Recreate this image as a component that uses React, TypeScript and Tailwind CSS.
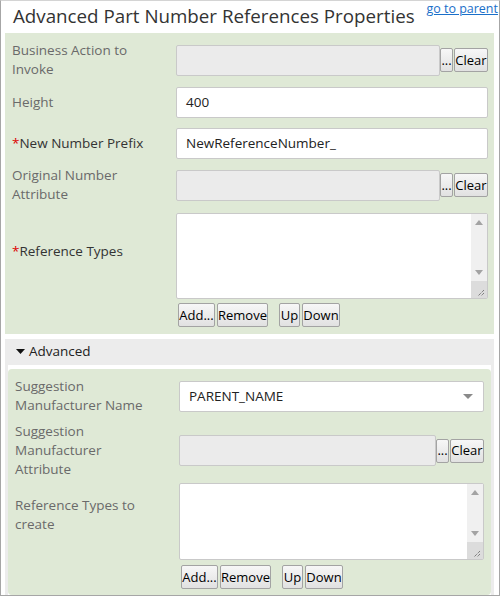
import React from "react";

const font = { fontFamily: '"Open Sans", "Noto Sans", sans-serif' };

const Btn: React.FC<{ label: string; w: string }> = ({ label, w }) => (
  <button
    type="button"
    className={`${w} h-[24px] flex items-center justify-center border border-[#a3a3a3] rounded-[2px] bg-gradient-to-b from-[#f7f7f7] to-[#e1e1e1] text-[13px] leading-none text-black whitespace-nowrap`}
  >
    {label}
  </button>
);

const Picker: React.FC = () => (
  <div className="flex flex-1 items-center">
    <div className="flex-1 h-[31px] border border-[#c9c9c9] rounded-[2px] bg-[#ebebeb]" />
    <Btn label="..." w="w-[13px]" />
    <Btn label="Clear" w="w-[34px] ml-px" />
  </div>
);

const TextBox: React.FC<{ value: string }> = ({ value }) => (
  <div className="flex-1 h-[31px] border border-[#c9c9c9] rounded-[2px] bg-white flex items-center px-[9px] text-[13.5px] text-[#222]">
    {value}
  </div>
);

const Grip = () => (
  <svg width="16" height="17" viewBox="0 0 16 17">
    <path d="M13 9 L7 15 M13 12 L10 15" stroke="#555" strokeWidth="1" strokeDasharray="1 1" />
  </svg>
);

const ListBox: React.FC<{ h: string }> = ({ h }) => (
  <div className={`flex-1 ${h} border border-[#c9c9c9] rounded-[2px] bg-white flex`}>
    <div className="flex-1" />
    <div className="w-[16px] bg-[#f0f0f0] flex flex-col">
      <div className="h-[17px] flex items-center justify-center">
        <svg width="8" height="5" viewBox="0 0 8 5">
          <path d="M0 5 L4 0 L8 5 Z" fill="#a3a3a3" />
        </svg>
      </div>
      <div className="flex-1" />
      <div className="h-[17px] flex items-center justify-center">
        <svg width="8" height="5" viewBox="0 0 8 5">
          <path d="M0 0 L8 0 L4 5 Z" fill="#a3a3a3" />
        </svg>
      </div>
      <div className="h-[17px] bg-[#dcdcdc]">
        <Grip />
      </div>
    </div>
  </div>
);

const ListButtons: React.FC<{ ml: string }> = ({ ml }) => (
  <div className={`flex items-center ${ml}`}>
    <Btn label="Add..." w="w-[37px]" />
    <Btn label="Remove" w="w-[51px] ml-[2px]" />
    <Btn label="Up" w="w-[21px] ml-[11px]" />
    <Btn label="Down" w="w-[38px] ml-[2px]" />
  </div>
);

const Label: React.FC<{ children: React.ReactNode; required?: boolean; cls?: string }> = ({
  children,
  required,
  cls = "",
}) => (
  <div
    className={`w-[164px] shrink-0 text-[13.5px] leading-[19px] whitespace-nowrap ${
      required ? "text-[#333]" : "text-[#6a6a6a]"
    } ${cls}`}
  >
    {required && <span className="text-[#d00]">*</span>}
    {children}
  </div>
);

export default function App() {
  return (
    <div
      style={font}
      className="w-[500px] h-[596px] border border-[#a6a6a6] border-t-[#d4d4d4] bg-white overflow-hidden"
    >
      {/* header */}
      <div className="h-[32px] flex items-start justify-between pl-[12px] pr-[1px]">
        <h1 className="text-[18.75px] leading-[30px] text-[#333] font-normal whitespace-nowrap min-w-0">
          Advanced Part Number References Properties
        </h1>
        <a
          href="#"
          className="shrink-0 text-[12.5px] leading-[18px] mt-[-1px] text-[#1a6fc9] underline whitespace-nowrap"
        >
          go to parent
        </a>
      </div>

      {/* main properties */}
      <div className="ml-[4px] mr-[5px] bg-[#dfe9d6] pl-[7px] pr-[6px] pt-[8px] pb-[7px] flex flex-col">
        <div className="flex items-center h-[38px]">
          <Label>
            Business Action to
            <br />
            Invoke
          </Label>
          <Picker />
        </div>
        <div className="flex items-center h-[31px] mt-[8px]">
          <Label>Height</Label>
          <TextBox value="400" />
        </div>
        <div className="flex items-center h-[31px] mt-[10px]">
          <Label required>New Number Prefix</Label>
          <TextBox value="NewReferenceNumber_" />
        </div>
        <div className="flex items-center h-[38px] mt-[7px]">
          <Label>
            Original Number
            <br />
            Attribute
          </Label>
          <Picker />
        </div>
        <div className="flex items-center mt-[9px]">
          <Label required cls="mb-[10px]">
            Reference Types
          </Label>
          <ListBox h="h-[86px]" />
        </div>
        <div className="flex mt-[4px]">
          <div className="w-[164px]" />
          <ListButtons ml="ml-[2px]" />
        </div>
      </div>

      {/* advanced */}
      <div className="ml-[4px] mr-[5px] mt-[5px] bg-[#ececec] px-[3px]">
        <div className="h-[26px] flex items-center pl-[8px] pb-[2px] text-[13.5px] text-[#222]">
          <svg width="9" height="5" viewBox="0 0 9 5" className="mr-[4px]">
            <path d="M0 0 L9 0 L4.5 5 Z" fill="#111" />
          </svg>
          Advanced
        </div>
        <div className="bg-white pt-[4px]">
          <div className="bg-[#dfe9d6] rounded-[4px] pl-[7px] pr-[7px] pt-[8px] pb-[6px] flex flex-col">
            <div className="flex items-center h-[38px]">
              <Label>
                Suggestion
                <br />
                Manufacturer Name
              </Label>
              <div className="flex-1 h-[31px] border border-[#c9c9c9] rounded-[2px] bg-white flex items-center justify-between pl-[9px] pr-[10px] text-[13.5px] text-[#222]">
                PARENT_NAME
                <svg width="10" height="5" viewBox="0 0 10 5">
                  <path d="M0 0 L10 0 L5 5 Z" fill="#8a8a8a" />
                </svg>
              </div>
            </div>
            <div className="flex items-center h-[57px] mt-[7px]">
              <Label>
                Suggestion
                <br />
                Manufacturer
                <br />
                Attribute
              </Label>
              <Picker />
            </div>
            <div className="flex items-center mt-[4px]">
              <Label cls="mb-[14px]">
                Reference Types to
                <br />
                create
              </Label>
              <ListBox h="h-[77px]" />
            </div>
            <div className="flex mt-[5px]">
              <div className="w-[164px]" />
              <ListButtons ml="ml-[2px]" />
            </div>
          </div>
        </div>
      </div>
    </div>
  );
}
